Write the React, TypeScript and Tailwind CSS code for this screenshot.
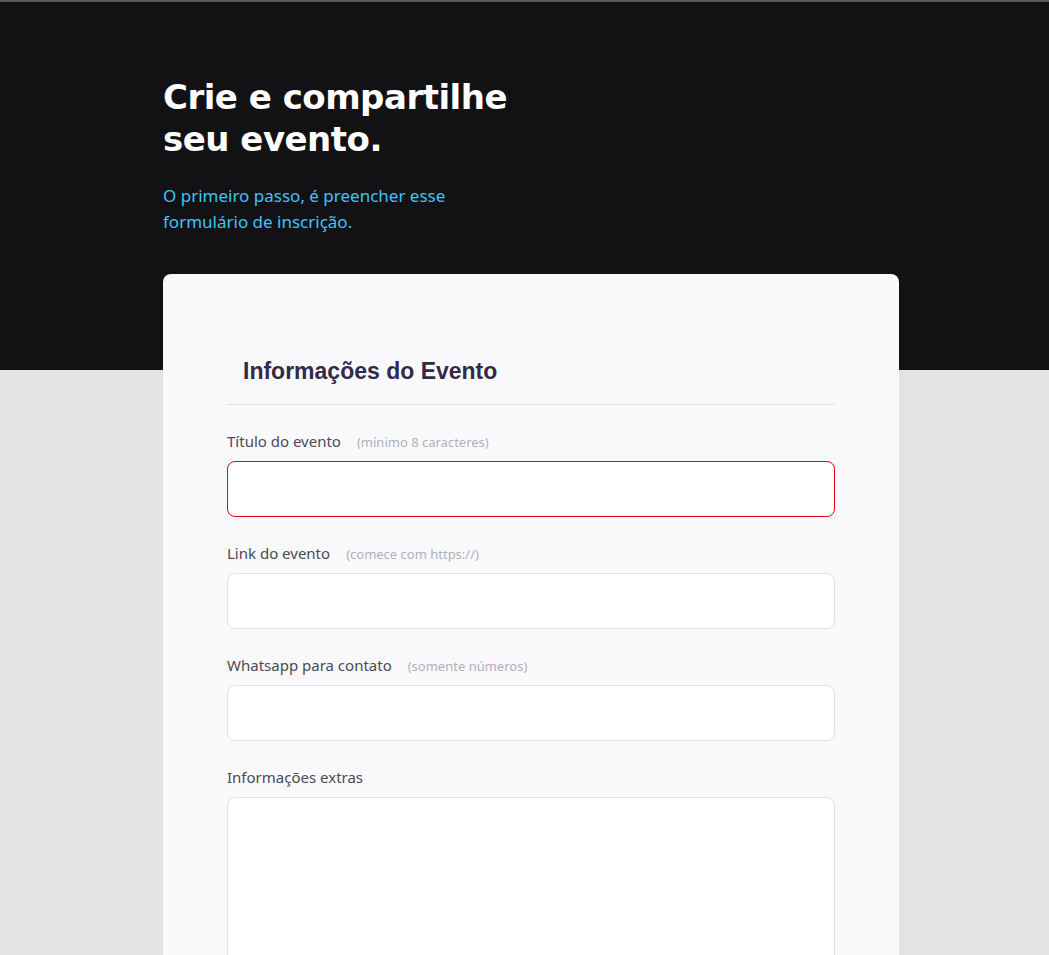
import React from "react"

const fields = [
  { label: "Título do evento", hint: "(mínimo 8 caracteres)", error: true },
  { label: "Link do evento", hint: "(comece com https://)" },
  { label: "Whatsapp para contato", hint: "(somente números)" },
]

export default function App() {
  return (
    <div className="min-h-screen bg-[#e3e3e3] font-['Noto_Sans',sans-serif]">
      <div className="h-[2px] bg-[#5a5a5e]" />
      <header className="h-[368px] bg-[#121214]">
        <div className="ml-[163px] w-[736px] pt-[74px]">
          <h1 className="font-['DejaVu_Sans',sans-serif] text-[34px] font-bold leading-[42px] tracking-[-0.5px] text-white">
            Crie e compartilhe
            <br />
            seu evento.
          </h1>
          <p className="mt-[23px] text-[17px] leading-[26px] text-[#3fc4f5]">
            O primeiro passo, é preencher esse
            <br />
            formulário de inscrição.
          </p>
        </div>
      </header>

      <main className="-mt-[96px] pb-16">
        <div className="ml-[163px] w-[736px] rounded-lg bg-[#f9f9fb] px-16 pt-[82px] pb-16">
          <h2 className="border-b border-[#e1e1e6] px-4 pb-[18px] font-['Liberation_Sans',sans-serif] text-[23px] font-semibold leading-[30px] text-[#322a48]">
            Informações do Evento
          </h2>

          <div className="mt-[26px] flex flex-col gap-[26px]">
            {fields.map((f) => (
              <div key={f.label}>
                <label className="flex h-5 items-baseline gap-4 text-[15px] leading-[20px] text-[#4a4a55]">
                  {f.label}
                  <span className="text-[13px] text-[#b0afbd]">{f.hint}</span>
                </label>
                <input
                  className={
                    f.error
                      ? "mt-[10px] block h-14 w-full rounded-lg border border-[#e5001f] bg-white px-4 outline-none"
                      : "mt-[10px] block h-14 w-full rounded-lg border border-[#e1e1e6] bg-white px-4 outline-none"
                  }
                />
              </div>
            ))}
            <div>
              <label className="block h-5 text-[15px] leading-[20px] text-[#4a4a55]">Informações extras</label>
              <textarea className="mt-[10px] block h-[200px] w-full resize-none rounded-lg border border-[#e1e1e6] bg-white px-4 py-3 outline-none" />
            </div>
          </div>
        </div>
      </main>
    </div>
  )
}
